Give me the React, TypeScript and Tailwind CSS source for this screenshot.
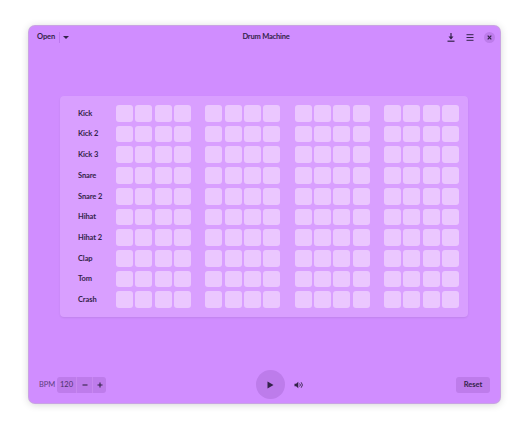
const tracks = ["Kick", "Kick 2", "Kick 3", "Snare", "Snare 2", "Hihat", "Hihat 2", "Clap", "Tom", "Crash"];
const groups = [0, 1, 2, 3];
const beats = [0, 1, 2, 3];

function Row({ name }: { name: string }) {
  return (
    <div className="flex h-[16.7px] items-center">
      <div className="w-[38px] text-[7.5px] font-bold tracking-[-0.1px] text-[#33234a]">{name}</div>
      <div className="flex gap-[14.3px]">
        {groups.map((g) => (
          <div key={g} className="flex gap-[2.33px]">
            {beats.map((b) => (
              <div key={b} className="h-[16.7px] w-[17px] rounded-[3px] bg-[#ebc7ff]" />
            ))}
          </div>
        ))}
      </div>
    </div>
  );
}

export default function App() {
  return (
    <div className="h-[435px] w-[529px] overflow-hidden bg-white pl-[29px] pt-[26px] font-['Lato',sans-serif]">
      <div className="flex h-[377px] w-[471px] flex-col rounded-[6px] bg-[#d08dff] shadow-[0_1px_8px_rgba(0,0,0,0.2)] ring-1 ring-[#c9a3e4]">
        <header className="grid h-[21px] grid-cols-[1fr_auto_1fr] items-center pl-[8px] pr-[5px] pt-[1px]">
          <div className="flex items-center">
            <span className="text-[7.5px] font-bold tracking-[-0.1px] text-[#33234a]">Open</span>
            <span className="ml-[4px] h-[11px] w-[1px] bg-[#bd77ef]" />
            <svg className="ml-[3px]" width="6" height="3" viewBox="0 0 6 3"><path d="M0 0h6L3 3z" fill="#33234a" /></svg>
          </div>
          <span className="text-center text-[7.5px] font-bold tracking-[-0.2px] text-[#33234a]">Drum Machine</span>
          <div className="flex items-center justify-end">
            <svg width="8" height="9" viewBox="0 0 8 9" className="mr-[11px]" fill="none" stroke="#33234a">
              <path d="M4 0v5.5" strokeWidth="1.2" />
              <path d="M1.5 3.5h5L4 6.5z" fill="#33234a" stroke="none" />
              <path d="M0.5 8.2h7" strokeWidth="1.2" />
            </svg>
            <svg width="8" height="7" viewBox="0 0 8 7" className="mr-[10px]" fill="none" stroke="#33234a" strokeWidth="1">
              <path d="M0.5 0.7h7M0.5 3.5h7M0.5 6.3h7" />
            </svg>
            <span className="flex h-[11px] w-[11px] items-center justify-center rounded-full bg-[#bd7ceb]">
              <svg width="5" height="5" viewBox="0 0 5 5" stroke="#33234a" strokeWidth="1.2"><path d="M0.7 0.7l3.6 3.6M4.3 0.7l-3.6 3.6" /></svg>
            </span>
          </div>
        </header>
        <div className="flex flex-1 items-center justify-center pb-[2px] pr-[1px]">
          <div className="flex h-[221px] w-[408px] flex-col justify-center gap-[4px] rounded-[4px] bg-[#d99fff] pl-[18px] shadow-[0_1px_2px_rgba(0,0,0,0.08)]">
            {tracks.map((t) => (
              <Row key={t} name={t} />
            ))}
          </div>
        </div>
        <footer className="mb-[2px] grid h-[33px] grid-cols-[217px_1fr_auto] items-center pl-[10px] pr-[10px]">
          <div className="flex items-center">
            <span className="w-[14px] text-[7.5px] tracking-[-0.1px] text-[#5d3f80]">BPM</span>
            <div className="ml-[4px] flex h-[16px] items-center rounded-[3px] bg-[#be7ceb] text-[#33234a]">
              <span className="w-[19px] text-center text-[7.5px] text-[#4a3268]">120</span>
              <span className="flex h-full w-[16px] items-center justify-center border-l border-[#c888f0]">
                <svg width="6" height="6" viewBox="0 0 6 6" stroke="#33234a" strokeWidth="1.1"><path d="M0.5 3h5" /></svg>
              </span>
              <span className="flex h-full w-[14px] items-center justify-center border-l border-[#c888f0]">
                <svg width="6" height="6" viewBox="0 0 6 6" stroke="#33234a" strokeWidth="1.1"><path d="M0.5 3h5M3 0.5v5" /></svg>
              </span>
            </div>
          </div>
          <div className="flex items-center gap-[9px]">
            <span className="flex h-[29px] w-[29px] items-center justify-center rounded-full bg-[#bd7ceb]">
              <svg width="7" height="8" viewBox="0 0 7 8"><path d="M0.5 0.5v7L6.5 4z" fill="#33234a" /></svg>
            </span>
            <svg width="10" height="8" viewBox="0 0 10 8" fill="none" stroke="#33234a" strokeWidth="0.9">
              <path d="M0.5 2.7h1.6L4.3 0.7v6.6L2.1 5.3H0.5z" fill="#33234a" stroke="none" />
              <path d="M5.6 2.5a2 2 0 0 1 0 3M7.2 1.3a4 4 0 0 1 0 5.4" />
            </svg>
          </div>
          <span className="flex h-[16px] w-[34px] items-center justify-center rounded-[3px] bg-[#be7ceb] text-[7.5px] font-bold text-[#33234a]">Reset</span>
        </footer>
      </div>
    </div>
  );
}
